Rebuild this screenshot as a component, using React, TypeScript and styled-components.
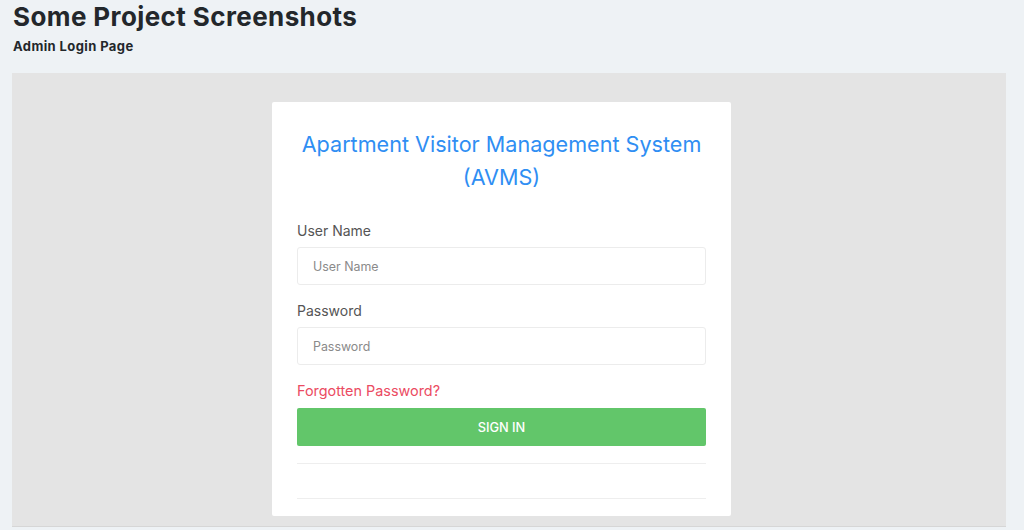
import React from 'react';
import styled, { createGlobalStyle } from 'styled-components';

const GlobalStyle = createGlobalStyle`
  html, body {
    margin: 0;
    padding: 0;
    background: #eef2f5;
  }
  * {
    box-sizing: border-box;
  }
`;

const Page = styled.div`
  width: 1024px;
  height: 530px;
  overflow: hidden;
  padding: 0 18px 0 12px;
  font-family: 'Inter', 'Open Sans', sans-serif;
  color: #222;
`;

const Title = styled.h1`
  margin: 0;
  padding: 2px 0 0 1px;
  font-size: 26px;
  line-height: 30px;
  letter-spacing: 0.4px;
  font-weight: 700;
  color: #23272b;
`;

const Subtitle = styled.h3`
  margin: 5px 0 0 1px;
  font-size: 13px;
  line-height: 18px;
  letter-spacing: 0.4px;
  font-weight: 700;
  color: #23272b;
`;

const Shot = styled.div`
  margin-top: 18px;
  height: 454px;
  background: #e4e4e4;
  border-bottom: 1px solid #d6d6d6;
  display: flex;
  justify-content: flex-start;
  padding: 29px 0 0 260px;
`;

const LoginCard = styled.div`
  width: 459px;
  height: 414px;
  background: #fff;
  border-radius: 2px;
  padding: 26px 25px 0;
  font-family: 'Inter', 'Open Sans', sans-serif;
`;

const CardTitle = styled.h2`
  margin: 0 0 27px;
  text-align: center;
  font-size: 21.6px;
  line-height: 33px;
  font-weight: 400;
  color: #2f8ef3;
`;

const Field = styled.div`
  margin-bottom: 16px;
`;

const Label = styled.label`
  display: block;
  font-size: 14px;
  line-height: 20px;
  color: #555;
  margin-bottom: 6px;
`;

const Input = styled.input`
  display: block;
  width: 100%;
  height: 38px;
  border: 1px solid #ececec;
  border-radius: 3px;
  padding: 0 15px;
  font-family: inherit;
  font-size: 12.4px;
  color: #555;
  outline: none;
  &::placeholder {
    color: #8a8a8a;
  }
`;

const ForgotLink = styled.a`
  display: block;
  margin-top: 0;
  font-size: 14.4px;
  line-height: 20px;
  color: #eb4b62;
  text-decoration: none;
`;

const SignInButton = styled.button`
  display: block;
  width: 100%;
  height: 38px;
  margin-top: 7px;
  border: none;
  border-radius: 2px;
  background: #62c66a;
  color: #fff;
  font-family: inherit;
  font-size: 12.8px;
  font-weight: 500;
  cursor: pointer;
`;

const Divider = styled.hr<{ gap: number }>`
  margin: ${p => p.gap}px 0 0;
  border: none;
  border-top: 1px solid #eeeeee;
`;

export default function App() {
  return (
    <>
      <GlobalStyle />
      <Page>
        <Title>Some Project Screenshots</Title>
        <Subtitle>Admin Login Page</Subtitle>
        <Shot>
          <LoginCard>
            <CardTitle>
              Apartment Visitor Management System
              <br />
              (AVMS)
            </CardTitle>
            <Field>
              <Label>User Name</Label>
              <Input placeholder="User Name" />
            </Field>
            <Field>
              <Label>Password</Label>
              <Input type="password" placeholder="Password" />
            </Field>
            <ForgotLink href="#">Forgotten Password?</ForgotLink>
            <SignInButton>SIGN IN</SignInButton>
            <Divider gap={17} />
            <Divider gap={34} />
          </LoginCard>
        </Shot>
      </Page>
    </>
  );
}
